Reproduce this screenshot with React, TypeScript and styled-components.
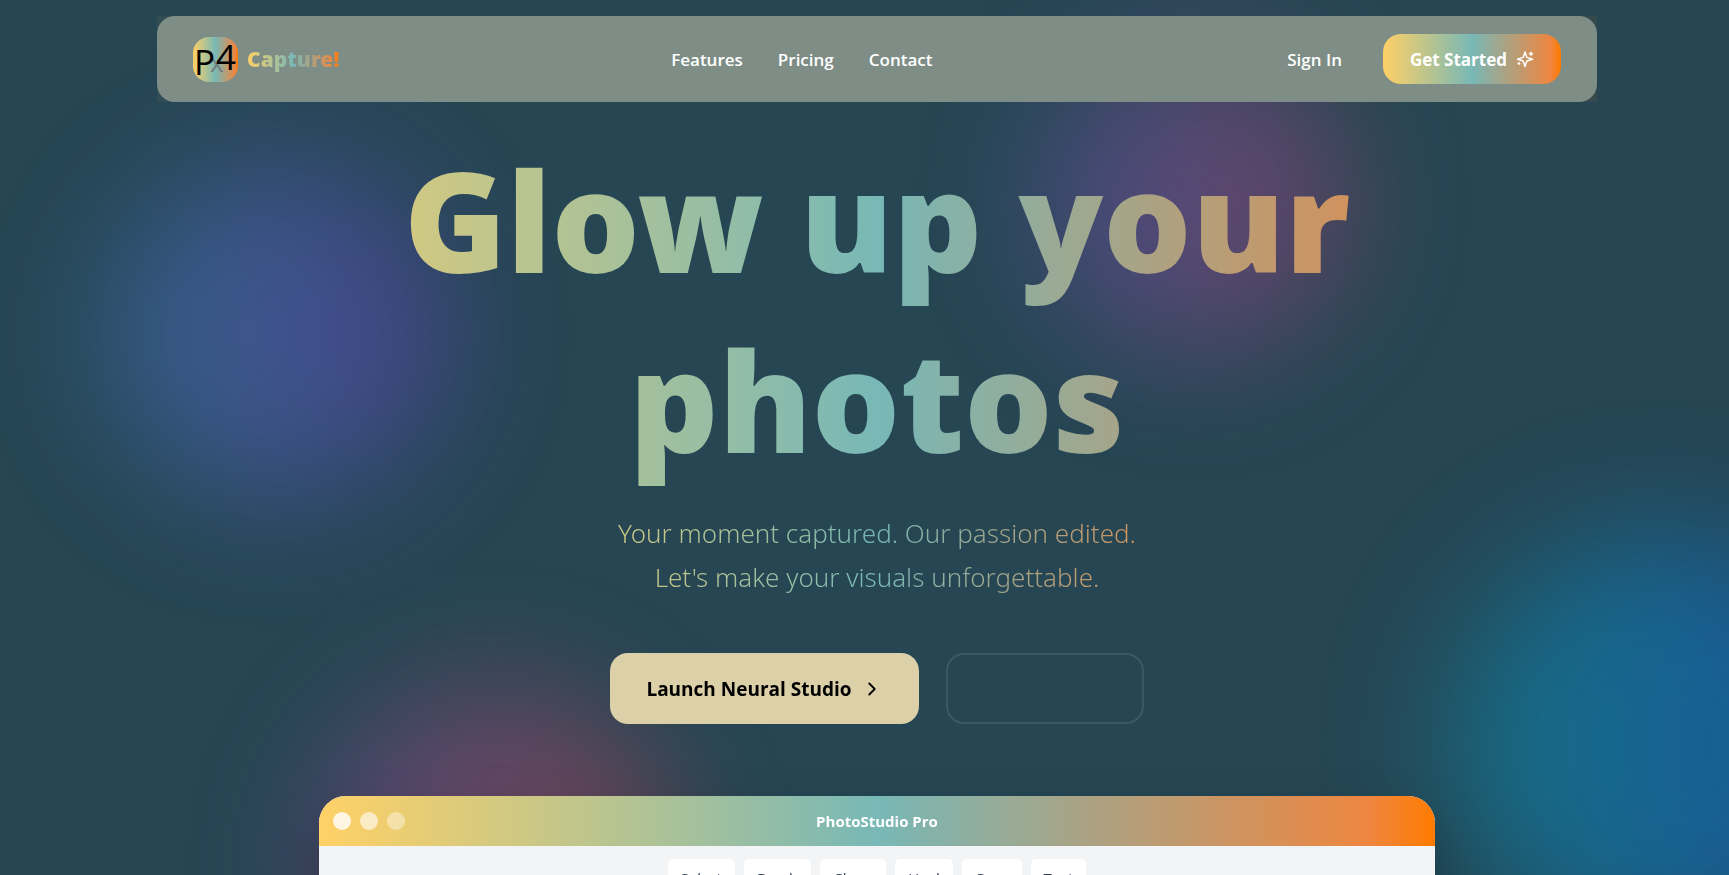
import React from "react";
import styled, { createGlobalStyle } from "styled-components";
import { ChevronRight } from "lucide-react";

const sunset = "linear-gradient(90deg, #ffd166 0%, #78b8b6 50%, #ee8640 94%, #ff7b00 100%)";

const GlobalStyle = createGlobalStyle`
  * { box-sizing: border-box; }
  body {
    margin: 0;
    background: #264653;
    color: #fff;
    font-family: "Segoe UI", "Open Sans", sans-serif;
    overflow-x: hidden;
  }
  button { font: inherit; border: 0; cursor: pointer; }
  a { color: inherit; text-decoration: none; }
`;

const Page = styled.div`
  position: relative;
  padding: 16px 0 0 25px;
  overflow: hidden;
`;

const Backdrop = styled.div`
  position: fixed;
  inset: 0;
  overflow: hidden;
  pointer-events: none;
`;

const Glow = styled.div<{ $x: string; $y: string; $size: number; $from: string; $to: string; $alpha: number }>`
  position: absolute;
  left: ${(p) => p.$x};
  top: ${(p) => p.$y};
  width: ${(p) => p.$size}px;
  height: ${(p) => p.$size}px;
  border-radius: 50%;
  background: linear-gradient(90deg, ${(p) => p.$from}, ${(p) => p.$to});
  opacity: ${(p) => p.$alpha};
  filter: blur(64px);
`;

const HeaderFrame = styled.header`
  position: relative;
  max-width: 1440px;
  margin: 0 auto;
  background: linear-gradient(90deg, rgba(255, 209, 102, 0.06), rgba(120, 184, 182, 0.06), rgba(255, 123, 0, 0.08));
`;

const NavBar = styled.nav`
  display: flex;
  align-items: center;
  justify-content: space-between;
  min-height: 86px;
  padding: 0 36px;
  border-radius: 18px;
  background: #7e8d85;
`;

const Brand = styled.a`
  display: flex;
  align-items: center;
  gap: 9px;
`;

const LogoTile = styled.span`
  width: 45px;
  height: 45px;
  border-radius: 16px;
  background: ${sunset};
`;

const BrandName = styled.span`
  font-family: "Noto Sans", sans-serif;
  font-size: 21px;
  line-height: 32px;
  font-weight: 900;
  color: transparent;
  background: ${sunset};
  background-clip: text;
`;

const Links = styled.div`
  display: flex;
  gap: 35px;
  font-size: 17px;
  font-weight: 600;
`;

const Actions = styled.div`
  display: flex;
  align-items: center;
  gap: 18px;
`;

const SignIn = styled.button`
  padding: 0 23px;
  background: none;
  color: #fff;
  font-size: 17px;
  font-weight: 600;
`;

const GetStarted = styled.button`
  display: flex;
  align-items: center;
  gap: 9px;
  height: 50px;
  padding: 0 27px;
  border-radius: 18px;
  background: ${sunset};
  color: #fff;
  font-size: 17px;
  font-weight: 700;
`;

const Hero = styled.main`
  position: relative;
  display: flex;
  flex-direction: column;
  align-items: center;
  padding: 27px 0 0;
`;

const Title = styled.h1`
  width: 100%;
  max-width: 1440px;
  margin: 0;
  text-align: center;
  font-family: "Noto Sans", sans-serif;
  font-size: 139px;
  line-height: 180px;
  font-weight: 900;
  color: transparent;
  background: ${sunset};
  background-clip: text;
`;

const Tagline = styled.p`
  width: 100%;
  max-width: 792px;
  margin: 22px 0 54px;
  text-align: center;
  font-family: "Noto Sans", sans-serif;
  font-size: 26px;
  line-height: 44px;
  font-weight: 300;
  color: transparent;
  background: ${sunset};
  background-clip: text;
`;

const Cta = styled.div`
  display: flex;
  gap: 27px;
`;

const Launch = styled.button`
  display: flex;
  align-items: center;
  gap: 9px;
  height: 71px;
  padding: 0 36px;
  border-radius: 18px;
  background: #dcd0a8;
  color: #000;
  font-size: 19px;
  font-weight: 700;
`;

const Outline = styled.button`
  width: 198px;
  height: 71px;
  border: 2px solid rgba(255, 255, 255, 0.1);
  border-radius: 18px;
  background: none;
`;

const Preview = styled.section`
  width: 100%;
  max-width: 1116px;
  margin-top: 72px;
  border-radius: 27px 27px 0 0;
  overflow: hidden;
  background: #f3f4f6;
  box-shadow: 0 28px 56px rgba(0, 0, 0, 0.25);
`;

const TitleBar = styled.div`
  display: grid;
  grid-template-columns: 1fr auto 1fr;
  align-items: center;
  height: 50px;
  padding: 0 14px;
  background: ${sunset};
`;

const Dots = styled.div`
  display: flex;
  gap: 9px;
`;

const Dot = styled.span<{ $alpha: number }>`
  width: 18px;
  height: 18px;
  border-radius: 50%;
  background: rgba(255, 255, 255, ${(p) => p.$alpha});
`;

const AppName = styled.h2`
  margin: 0;
  font-size: 15px;
  line-height: 20px;
  font-weight: 700;
`;

const Tools = styled.div`
  display: flex;
  justify-content: center;
  gap: 9px;
  min-height: 70px;
  padding: 13px 14px;
`;

const Tool = styled.button`
  height: 38px;
  padding: 0 13px;
  border-radius: 5px;
  background: #fff;
  color: #374151;
  font-size: 15px;
`;

const Logo = () => (
  <LogoTile>
    <svg width="45" height="45" viewBox="0 0 45 45" aria-hidden="true">
      <g fontFamily="Open Sans, sans-serif">
        <text x="17" y="35" fontSize="26" fill="#777b80">x</text>
        <text x="1" y="38" fontSize="35" fill="#000">P</text>
        <text x="23" y="33" fontSize="35" fill="#000">4</text>
      </g>
    </svg>
  </LogoTile>
);

const SparkIcon = () => (
  <svg
    width="18"
    height="18"
    viewBox="0 0 24 24"
    fill="none"
    stroke="currentColor"
    strokeWidth="2"
    strokeLinecap="round"
    strokeLinejoin="round"
    aria-hidden="true"
  >
    <path d="M12 2.5l-2.1 6.4a2 2 0 0 1-1.3 1.3L2 12.3l6.6 2.1a2 2 0 0 1 1.3 1.3L12 22l2.1-6.3a2 2 0 0 1 1.3-1.3l6.6-2.1-6.6-2.1a2 2 0 0 1-1.3-1.3z" />
    <path d="M20 3v4M22 5h-4M4 17v2M5 18H3" />
  </svg>
);

const tools = ["Select", "Brush", "Clone", "Heal", "Crop", "Text"];

export default function App() {
  return (
    <>
      <GlobalStyle />
      <Backdrop>
        <Glow $x="6%" $y="160px" $size={345} $from="#4a8fe0" $to="#7a3fe0" $alpha={0.4} />
        <Glow $x="60%" $y="48px" $size={310} $from="#6a5ac8" $to="#d0407a" $alpha={0.42} />
        <Glow $x="18%" $y="685px" $size={360} $from="#9a50b0" $to="#f04050" $alpha={0.4} />
        <Glow $x="84%" $y="530px" $size={430} $from="#0a94ac" $to="#1060d8" $alpha={0.56} />
      </Backdrop>
      <Page>
        <HeaderFrame>
          <NavBar>
            <Brand href="#" aria-label="Capture!">
              <Logo />
              <BrandName>Capture!</BrandName>
            </Brand>
            <Links>
              <a href="#features">Features</a>
              <a href="#pricing">Pricing</a>
              <a href="#contact">Contact</a>
            </Links>
            <Actions>
              <SignIn>Sign In</SignIn>
              <GetStarted>
                Get Started
                <SparkIcon />
              </GetStarted>
            </Actions>
          </NavBar>
        </HeaderFrame>
        <Hero>
          <Title>
            Glow up your
            <br />
            photos
          </Title>
          <Tagline>
            Your moment captured. Our passion edited.
            <br />
            Let's make your visuals unforgettable.
          </Tagline>
          <Cta>
            <Launch>
              Launch Neural Studio
              <ChevronRight size={22} />
            </Launch>
            <Outline aria-label="Watch demo" />
          </Cta>
          <Preview>
            <TitleBar>
              <Dots>
                <Dot $alpha={0.8} />
                <Dot $alpha={0.6} />
                <Dot $alpha={0.4} />
              </Dots>
              <AppName>PhotoStudio Pro</AppName>
            </TitleBar>
            <Tools>
              {tools.map((name) => (
                <Tool key={name}>{name}</Tool>
              ))}
            </Tools>
          </Preview>
        </Hero>
      </Page>
    </>
  );
}
